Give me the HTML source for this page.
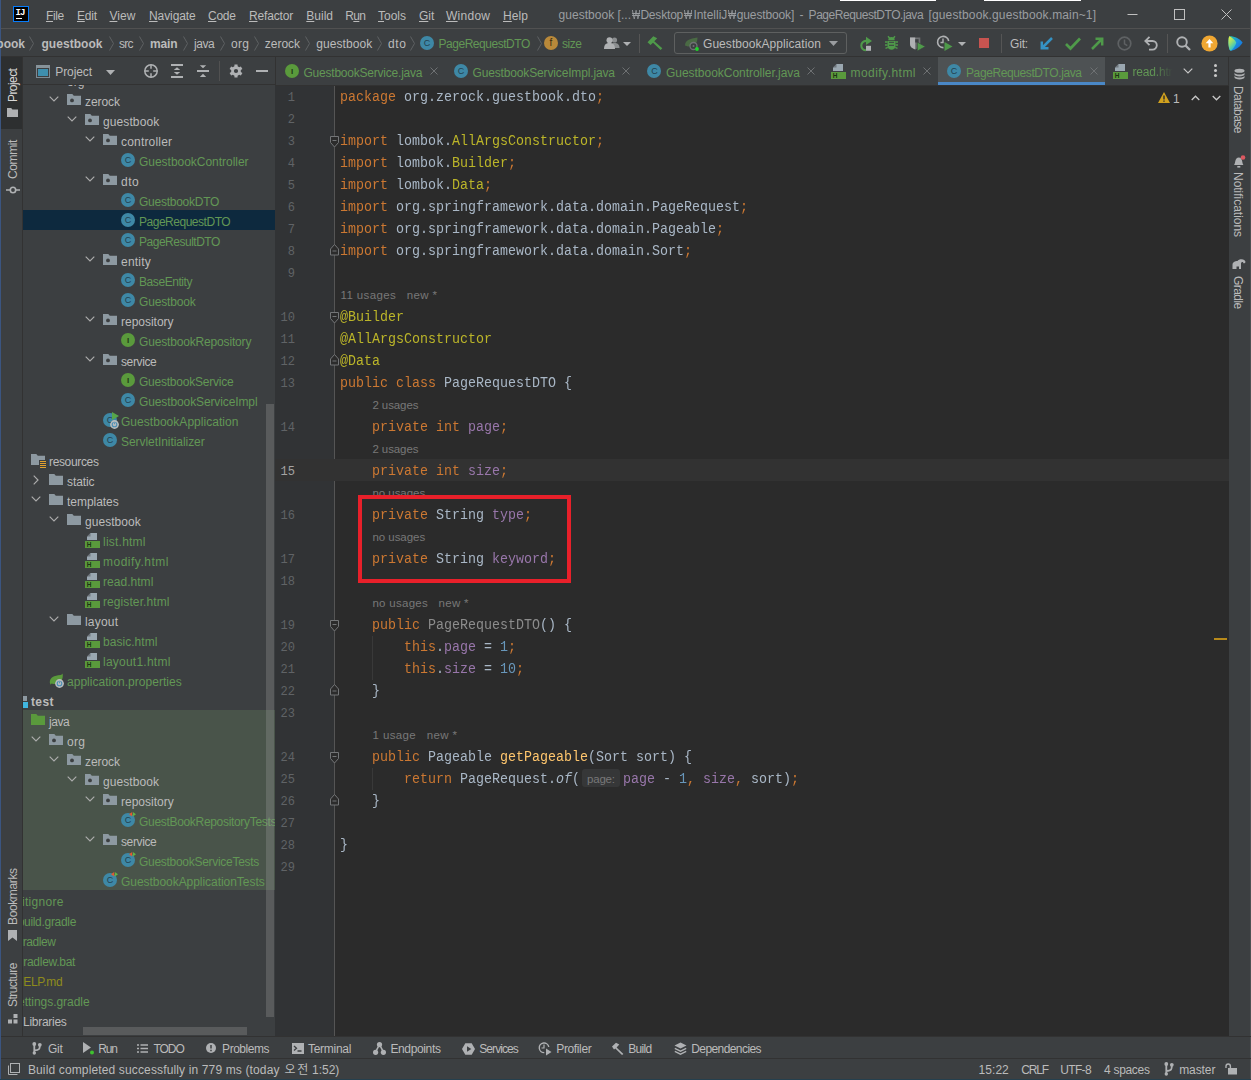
<!DOCTYPE html><html><head><meta charset="utf-8"><title>IntelliJ</title><style>
*{box-sizing:border-box;margin:0;padding:0}
html,body{width:1251px;height:1080px;overflow:hidden;background:#3c3f41}
body{position:relative;font-family:"Liberation Sans", "Noto Sans CJK KR", sans-serif;font-size:12px;color:#bbbbbb;line-height:1}
.a{position:absolute}
.t{position:absolute;white-space:pre;line-height:20px;height:20px}
.g{color:#629755}
.row{position:absolute;left:23px;width:252px;height:20px}
svg{position:absolute;overflow:visible}
u{text-underline-offset:1px;text-decoration-thickness:1px}
.code{position:absolute;left:340px;font-family:"Liberation Mono", monospace;font-size:13.33px;line-height:22px;height:22px;white-space:pre;color:#a9b7c6;transform:scaleY(1.12);transform-origin:0 14.600px}
.ln{position:absolute;left:275px;width:20px;text-align:right;font-family:"Liberation Mono", monospace;font-size:12px;line-height:22px;height:22px;color:#606366;white-space:pre}
.hint{position:absolute;font-size:11.5px;line-height:22px;height:22px;color:#787878;white-space:pre}
.k{color:#cc7832}.an{color:#bbb529}.f{color:#9876aa}.n{color:#6897bb}.m{color:#ffc66d}
.ic{position:absolute;width:14px;height:14px;border-radius:50%;font-size:9px;line-height:15.500px;text-align:center;color:#23414e}
.vt{position:absolute;white-space:pre;line-height:14px;height:14px;transform-origin:0 0}
</style></head><body><div class="a" style="left:0;top:0;width:1251px;height:1080px;background:#3c3f41"></div>
<div class="a" style="left:840px;top:0;width:96px;height:1px;background:#fff"></div>
<div class="a" style="left:984px;top:0;width:97px;height:1px;background:#fff"></div>
<div class="a" style="left:1px;top:28px;width:1250px;height:1px;background:#515151"></div>
<div class="a" style="left:1px;top:56px;width:1250px;height:1px;background:#323232"></div>
<div class="a" style="left:275px;top:86px;width:954px;height:951px;background:#2b2b2b"></div>
<div class="a" style="left:275px;top:86px;width:60px;height:951px;background:#313335"></div>
<div class="a" style="left:334px;top:86px;width:1px;height:951px;background:#555555"></div>
<div class="a" style="left:275px;top:459px;width:954px;height:22px;background:#323232"></div>
<div class="a" style="left:0;top:0;width:1px;height:1080px;background:#3b5580"></div>
<div class="a" style="left:1px;top:57px;width:21px;height:72px;background:#2d2f30"></div>
<div class="a" style="left:22px;top:57px;width:1px;height:980px;background:#323232"></div>
<div class="a" style="left:23px;top:84px;width:252px;height:1px;background:#323232"></div>
<div class="a" style="left:275px;top:57px;width:1px;height:28px;background:#323232"></div>
<div class="a" style="left:275px;top:85px;width:954px;height:1px;background:#323232"></div>
<div class="a" style="left:1228px;top:57px;width:1px;height:29px;background:#323232"></div>
<div class="a" style="left:1250px;top:0;width:1px;height:1080px;background:#4e5153"></div>
<div class="a" style="left:1px;top:1036px;width:1250px;height:1px;background:#323232"></div>
<div class="a" style="left:1px;top:1058px;width:1250px;height:1px;background:#323232"></div>
<div class="a" style="left:0;top:1079px;width:1251px;height:1px;background:#25404e"></div>
<div class="a" style="left:13px;top:6px;width:16px;height:16px;background:#000;border:1px solid #087cfa"></div>
<div class="a" style="left:15.500px;top:9px;font-family:'Liberation Mono',monospace;font-weight:bold;font-size:9px;line-height:9px;color:#fff;letter-spacing:-1px">IJ</div>
<div class="a" style="left:16px;top:18px;width:6px;height:1px;background:#fff"></div>
<div class="t" style="left:46px;top:6px;letter-spacing:-0.346px;"><u>F</u>ile</div>
<div class="t" style="left:77px;top:6px;letter-spacing:-0.226px;"><u>E</u>dit</div>
<div class="t" style="left:109.5px;top:6px;letter-spacing:0.069px;"><u>V</u>iew</div>
<div class="t" style="left:149px;top:6px;letter-spacing:-0.095px;"><u>N</u>avigate</div>
<div class="t" style="left:208px;top:6px;letter-spacing:-0.296px;"><u>C</u>ode</div>
<div class="t" style="left:249px;top:6px;letter-spacing:-0.165px;"><u>R</u>efactor</div>
<div class="t" style="left:306.3px;top:6px;letter-spacing:0.004px;"><u>B</u>uild</div>
<div class="t" style="left:345.3px;top:6px;letter-spacing:-0.657px;">R<u>u</u>n</div>
<div class="t" style="left:378px;top:6px;letter-spacing:-0.004px;"><u>T</u>ools</div>
<div class="t" style="left:419px;top:6px;letter-spacing:-0.017px;"><u>G</u>it</div>
<div class="t" style="left:446px;top:6px;letter-spacing:0.264px;"><u>W</u>indow</div>
<div class="t" style="left:503px;top:6px;letter-spacing:0.106px;"><u>H</u>elp</div>
<div class="t" style="left:558.5px;top:5px;color:#9a9da0;letter-spacing:0.035px;">guestbook [...</div>
<div class="t" style="left:631.8px;top:5px;color:#9a9da0;width:8.500px;overflow:visible"><span style="display:inline-block;transform:scaleX(0.72);transform-origin:0 50%">₩</span></div>
<div class="t" style="left:684.2px;top:5px;color:#9a9da0;width:8.500px;overflow:visible"><span style="display:inline-block;transform:scaleX(0.72);transform-origin:0 50%">₩</span></div>
<div class="t" style="left:728px;top:5px;color:#9a9da0;width:8.500px;overflow:visible"><span style="display:inline-block;transform:scaleX(0.72);transform-origin:0 50%">₩</span></div>
<div class="t" style="left:640.4px;top:5px;color:#9a9da0;letter-spacing:-0.187px;">Desktop</div>
<div class="t" style="left:693.4px;top:5px;color:#9a9da0;letter-spacing:-0.016px;">IntelliJ</div>
<div class="t" style="left:736.8px;top:5px;color:#9a9da0;letter-spacing:-0.135px;">guestbook]</div>
<div class="t" style="left:799.6px;top:5px;color:#9a9da0;">-</div>
<div class="t" style="left:808.6px;top:5px;color:#9a9da0;letter-spacing:-0.455px;">PageRequestDTO.java</div>
<div class="t" style="left:928.5px;top:5px;color:#9a9da0;letter-spacing:0.138px;">[guestbook.guestbook.main~1]</div>
<svg style="left:1127px;top:9px" width="110" height="12" viewBox="0 0 110 12"><path d="M0.500 5.500h10" stroke="#c0c0c0" stroke-width="1"/><rect x="47.500" y="0.500" width="10" height="10" fill="none" stroke="#c0c0c0"/><path d="M94.500 0.500l10 10M104.500 0.500L94.500 10.500" stroke="#c0c0c0" stroke-width="1"/></svg>
<div class="t" style="left:-3.664999999999999px;top:34px;font-weight:bold;">book</div>
<div class="t" style="left:41.5px;top:34px;font-weight:bold;letter-spacing:0.041px;">guestbook</div>
<div class="t" style="left:119px;top:34px;letter-spacing:-0.748px;">src</div>
<div class="t" style="left:150px;top:34px;font-weight:bold;letter-spacing:-0.169px;">main</div>
<div class="t" style="left:194px;top:34px;letter-spacing:-0.471px;">java</div>
<div class="t" style="left:231px;top:34px;letter-spacing:0.328px;">org</div>
<div class="t" style="left:264.8px;top:34px;letter-spacing:-0.029px;">zerock</div>
<div class="t" style="left:316.2px;top:34px;letter-spacing:0.090px;">guestbook</div>
<div class="t" style="left:388px;top:34px;letter-spacing:0.659px;">dto</div>
<svg style="left:28.8px;top:35.500px" width="5" height="15" viewBox="0 0 5 15"><path d="M0.500 0.500L4.500 7.500L0.500 14.500" fill="none" stroke="#5e6163" stroke-width="1"/></svg>
<svg style="left:108.8px;top:35.500px" width="5" height="15" viewBox="0 0 5 15"><path d="M0.500 0.500L4.500 7.500L0.500 14.500" fill="none" stroke="#5e6163" stroke-width="1"/></svg>
<svg style="left:139.3px;top:35.500px" width="5" height="15" viewBox="0 0 5 15"><path d="M0.500 0.500L4.500 7.500L0.500 14.500" fill="none" stroke="#5e6163" stroke-width="1"/></svg>
<svg style="left:183.3px;top:35.500px" width="5" height="15" viewBox="0 0 5 15"><path d="M0.500 0.500L4.500 7.500L0.500 14.500" fill="none" stroke="#5e6163" stroke-width="1"/></svg>
<svg style="left:220.3px;top:35.500px" width="5" height="15" viewBox="0 0 5 15"><path d="M0.500 0.500L4.500 7.500L0.500 14.500" fill="none" stroke="#5e6163" stroke-width="1"/></svg>
<svg style="left:254.3px;top:35.500px" width="5" height="15" viewBox="0 0 5 15"><path d="M0.500 0.500L4.500 7.500L0.500 14.500" fill="none" stroke="#5e6163" stroke-width="1"/></svg>
<svg style="left:305.3px;top:35.500px" width="5" height="15" viewBox="0 0 5 15"><path d="M0.500 0.500L4.500 7.500L0.500 14.500" fill="none" stroke="#5e6163" stroke-width="1"/></svg>
<svg style="left:377.3px;top:35.500px" width="5" height="15" viewBox="0 0 5 15"><path d="M0.500 0.500L4.500 7.500L0.500 14.500" fill="none" stroke="#5e6163" stroke-width="1"/></svg>
<svg style="left:410.3px;top:35.500px" width="5" height="15" viewBox="0 0 5 15"><path d="M0.500 0.500L4.500 7.500L0.500 14.500" fill="none" stroke="#5e6163" stroke-width="1"/></svg>
<svg style="left:536.8px;top:35.500px" width="5" height="15" viewBox="0 0 5 15"><path d="M0.500 0.500L4.500 7.500L0.500 14.500" fill="none" stroke="#5e6163" stroke-width="1"/></svg>
<div class="ic" style="left:420px;top:36px;background:#3e88a6">C</div>
<div class="t" style="left:438.5px;top:34px;color:#629755;letter-spacing:-0.464px;">PageRequestDTO</div>
<div class="ic" style="left:544px;top:36px;background:#b9893a;color:#3d2c10;font-size:10px;line-height:14px">f</div>
<div class="t" style="left:562px;top:34px;color:#629755;letter-spacing:-0.447px;">size</div>
<div class="a" style="left:639px;top:34px;width:1px;height:19px;background:#555"></div>
<div class="a" style="left:674px;top:32px;width:173px;height:22px;border:1px solid #5e6060;border-radius:3px"></div>
<div class="t" style="left:703px;top:34px;letter-spacing:0.056px;">GuestbookApplication</div>
<svg style="left:829px;top:41px" width="9" height="5" viewBox="0 0 9 5"><path d="M0 0h9L4.5 5z" fill="#9a9da0"/></svg>
<div class="a" style="left:1001px;top:34px;width:1px;height:19px;background:#555"></div>
<div class="a" style="left:1167px;top:34px;width:1px;height:19px;background:#555"></div>
<div class="t" style="left:1010px;top:34px;letter-spacing:-0.156px;">Git:</div>
<div class="a" style="left:23px;top:710px;width:252px;height:180px;background:#49544a"></div>
<div class="a" style="left:23px;top:210px;width:252px;height:20px;background:#0d293e"></div>
<div class="a" id="tree" style="left:23px;top:85px;width:252px;height:951px;overflow:hidden">
<svg style="left:26px;top:-11px" width="14" height="11" viewBox="0 0 14 11"><path d="M0 0h5.300l1.500 1.800H14V11H0z" fill="#8d99a1"/><circle cx="5" cy="6.400" r="1.900" fill="#3c3f41"/></svg>
<svg style="left:8px;top:-9px" width="10" height="6" viewBox="0 0 10 6"><path d="M0.7 0.7L5 5L9.3 0.7" fill="none" stroke="#adadad" stroke-width="1.150"/></svg>
<div class="t" style="left:44px;top:-13.299999999999997px;color:#bbbbbb;">org</div>
<svg style="left:44px;top:9px" width="14" height="11" viewBox="0 0 14 11"><path d="M0 0h5.300l1.500 1.800H14V11H0z" fill="#8d99a1"/><circle cx="5" cy="6.400" r="1.900" fill="#3c3f41"/></svg>
<svg style="left:26px;top:11px" width="10" height="6" viewBox="0 0 10 6"><path d="M0.7 0.7L5 5L9.3 0.7" fill="none" stroke="#adadad" stroke-width="1.150"/></svg>
<div class="t" style="left:62px;top:6.700000000000003px;color:#bbbbbb;letter-spacing:-0.069px;">zerock</div>
<svg style="left:62px;top:29px" width="14" height="11" viewBox="0 0 14 11"><path d="M0 0h5.300l1.500 1.800H14V11H0z" fill="#8d99a1"/><circle cx="5" cy="6.400" r="1.900" fill="#3c3f41"/></svg>
<svg style="left:44px;top:31px" width="10" height="6" viewBox="0 0 10 6"><path d="M0.7 0.7L5 5L9.3 0.7" fill="none" stroke="#adadad" stroke-width="1.150"/></svg>
<div class="t" style="left:80px;top:26.700000000000003px;color:#bbbbbb;letter-spacing:0.103px;">guestbook</div>
<svg style="left:80px;top:49px" width="14" height="11" viewBox="0 0 14 11"><path d="M0 0h5.300l1.500 1.800H14V11H0z" fill="#8d99a1"/><circle cx="5" cy="6.400" r="1.900" fill="#3c3f41"/></svg>
<svg style="left:62px;top:51px" width="10" height="6" viewBox="0 0 10 6"><path d="M0.7 0.7L5 5L9.3 0.7" fill="none" stroke="#adadad" stroke-width="1.150"/></svg>
<div class="t" style="left:98px;top:46.69999999999999px;color:#bbbbbb;letter-spacing:0.183px;">controller</div>
<div class="ic" style="left:98px;top:68px;background:#3e88a6">C</div>
<div class="t" style="left:116px;top:66.69999999999999px;color:#629755;letter-spacing:-0.026px;">GuestbookController</div>
<svg style="left:80px;top:89px" width="14" height="11" viewBox="0 0 14 11"><path d="M0 0h5.300l1.500 1.800H14V11H0z" fill="#8d99a1"/><circle cx="5" cy="6.400" r="1.900" fill="#3c3f41"/></svg>
<svg style="left:62px;top:91px" width="10" height="6" viewBox="0 0 10 6"><path d="M0.7 0.7L5 5L9.3 0.7" fill="none" stroke="#adadad" stroke-width="1.150"/></svg>
<div class="t" style="left:98px;top:86.69999999999999px;color:#bbbbbb;letter-spacing:0.459px;">dto</div>
<div class="ic" style="left:98px;top:108px;background:#3e88a6">C</div>
<div class="t" style="left:116px;top:106.69999999999999px;color:#629755;letter-spacing:-0.250px;">GuestbookDTO</div>
<div class="ic" style="left:98px;top:128px;background:#3e88a6">C</div>
<div class="t" style="left:116px;top:126.69999999999999px;color:#629755;letter-spacing:-0.480px;">PageRequestDTO</div>
<div class="ic" style="left:98px;top:148px;background:#3e88a6">C</div>
<div class="t" style="left:116px;top:146.7px;color:#629755;letter-spacing:-0.488px;">PageResultDTO</div>
<svg style="left:80px;top:169px" width="14" height="11" viewBox="0 0 14 11"><path d="M0 0h5.300l1.500 1.800H14V11H0z" fill="#8d99a1"/><circle cx="5" cy="6.400" r="1.900" fill="#3c3f41"/></svg>
<svg style="left:62px;top:171px" width="10" height="6" viewBox="0 0 10 6"><path d="M0.7 0.7L5 5L9.3 0.7" fill="none" stroke="#adadad" stroke-width="1.150"/></svg>
<div class="t" style="left:98px;top:166.7px;color:#bbbbbb;letter-spacing:0.224px;">entity</div>
<div class="ic" style="left:98px;top:188px;background:#3e88a6">C</div>
<div class="t" style="left:116px;top:186.7px;color:#629755;letter-spacing:-0.429px;">BaseEntity</div>
<div class="ic" style="left:98px;top:208px;background:#3e88a6">C</div>
<div class="t" style="left:116px;top:206.7px;color:#629755;letter-spacing:-0.155px;">Guestbook</div>
<svg style="left:80px;top:229px" width="14" height="11" viewBox="0 0 14 11"><path d="M0 0h5.300l1.500 1.800H14V11H0z" fill="#8d99a1"/><circle cx="5" cy="6.400" r="1.900" fill="#3c3f41"/></svg>
<svg style="left:62px;top:231px" width="10" height="6" viewBox="0 0 10 6"><path d="M0.7 0.7L5 5L9.3 0.7" fill="none" stroke="#adadad" stroke-width="1.150"/></svg>
<div class="t" style="left:98px;top:226.7px;color:#bbbbbb;letter-spacing:-0.010px;">repository</div>
<div class="ic" style="left:98px;top:248px;background:#5a9a3c;color:#1f3a16;font-weight:bold;font-size:8px">I</div>
<div class="t" style="left:116px;top:246.7px;color:#629755;letter-spacing:-0.166px;">GuestbookRepository</div>
<svg style="left:80px;top:269px" width="14" height="11" viewBox="0 0 14 11"><path d="M0 0h5.300l1.500 1.800H14V11H0z" fill="#8d99a1"/><circle cx="5" cy="6.400" r="1.900" fill="#3c3f41"/></svg>
<svg style="left:62px;top:271px" width="10" height="6" viewBox="0 0 10 6"><path d="M0.7 0.7L5 5L9.3 0.7" fill="none" stroke="#adadad" stroke-width="1.150"/></svg>
<div class="t" style="left:98px;top:266.7px;color:#bbbbbb;letter-spacing:-0.385px;">service</div>
<div class="ic" style="left:98px;top:288px;background:#5a9a3c;color:#1f3a16;font-weight:bold;font-size:8px">I</div>
<div class="t" style="left:116px;top:286.7px;color:#629755;letter-spacing:-0.230px;">GuestbookService</div>
<div class="ic" style="left:98px;top:308px;background:#3e88a6">C</div>
<div class="t" style="left:116px;top:306.7px;color:#629755;letter-spacing:-0.112px;">GuestbookServiceImpl</div>
<div class="ic" style="left:80px;top:328px;background:#3e88a6">C</div>
<svg style="left:89px;top:327px" width="7" height="8" viewBox="0 0 7 8"><path d="M0 0l7 4L0 8z" fill="#57a64a"/></svg>
<svg style="left:86.5px;top:334.5px" width="9" height="9" viewBox="0 0 9 9"><circle cx="4.500" cy="4.500" r="4.400" fill="#b9bcbe"/><circle cx="4.500" cy="4.500" r="2.300" fill="none" stroke="#4d8fb5" stroke-width="1.100"/><path d="M4.500 2v2.500" stroke="#b9bcbe" stroke-width="1.600"/><path d="M4.500 2.300v2" stroke="#4d8fb5" stroke-width="0.900"/></svg>
<div class="t" style="left:98px;top:326.7px;color:#629755;letter-spacing:0.034px;">GuestbookApplication</div>
<div class="ic" style="left:80px;top:348px;background:#3e88a6">C</div>
<div class="t" style="left:98px;top:346.7px;color:#629755;letter-spacing:-0.059px;">ServletInitializer</div>
<svg style="left:8px;top:369px" width="14" height="11" viewBox="0 0 14 11"><path d="M0 0h5.300l1.500 1.800H14V11H0z" fill="#8d99a1"/></svg>
<svg style="left:16px;top:375px" width="7" height="9" viewBox="0 0 7 9"><rect x="0" y="0" width="7" height="9" fill="#3c3f41"/><path d="M1 1.500h6M1 3.500h6M1 5.500h6M1 7.500h6" stroke="#e0a030" stroke-width="1"/></svg>
<div class="t" style="left:26px;top:366.7px;color:#bbbbbb;letter-spacing:-0.349px;">resources</div>
<svg style="left:26px;top:389px" width="14" height="11" viewBox="0 0 14 11"><path d="M0 0h5.300l1.500 1.800H14V11H0z" fill="#8d99a1"/></svg>
<svg style="left:10px;top:390px" width="6" height="10" viewBox="0 0 6 10"><path d="M0.7 0.7L5 5L0.7 9.3" fill="none" stroke="#adadad" stroke-width="1.150"/></svg>
<div class="t" style="left:44px;top:386.7px;color:#bbbbbb;letter-spacing:-0.102px;">static</div>
<svg style="left:26px;top:409px" width="14" height="11" viewBox="0 0 14 11"><path d="M0 0h5.300l1.500 1.800H14V11H0z" fill="#8d99a1"/></svg>
<svg style="left:8px;top:411px" width="10" height="6" viewBox="0 0 10 6"><path d="M0.7 0.7L5 5L9.3 0.7" fill="none" stroke="#adadad" stroke-width="1.150"/></svg>
<div class="t" style="left:44px;top:406.7px;color:#bbbbbb;letter-spacing:-0.041px;">templates</div>
<svg style="left:44px;top:429px" width="14" height="11" viewBox="0 0 14 11"><path d="M0 0h5.300l1.500 1.800H14V11H0z" fill="#8d99a1"/></svg>
<svg style="left:26px;top:431px" width="10" height="6" viewBox="0 0 10 6"><path d="M0.7 0.7L5 5L9.3 0.7" fill="none" stroke="#adadad" stroke-width="1.150"/></svg>
<div class="t" style="left:62px;top:426.7px;color:#bbbbbb;letter-spacing:0.040px;">guestbook</div>
<svg style="left:62px;top:448px" width="15" height="15" viewBox="0 0 15 15"><path d="M5.500 0H12v7H2V3.500z" fill="#9aa7b0"/><path d="M5.500 0v3.500H2z" fill="#3c3f41" opacity=".45"/><rect x="0" y="8" width="15" height="7" fill="#5a9a3c"/><text x="1.800" y="13.900" font-family="Liberation Sans" font-weight="bold" font-size="6.500" fill="#1d3314">H</text></svg>
<div class="t" style="left:80px;top:446.70000000000005px;color:#629755;letter-spacing:0.229px;">list.html</div>
<svg style="left:62px;top:468px" width="15" height="15" viewBox="0 0 15 15"><path d="M5.500 0H12v7H2V3.500z" fill="#9aa7b0"/><path d="M5.500 0v3.500H2z" fill="#3c3f41" opacity=".45"/><rect x="0" y="8" width="15" height="7" fill="#5a9a3c"/><text x="1.800" y="13.900" font-family="Liberation Sans" font-weight="bold" font-size="6.500" fill="#1d3314">H</text></svg>
<div class="t" style="left:80px;top:466.70000000000005px;color:#629755;letter-spacing:0.504px;">modify.html</div>
<svg style="left:62px;top:488px" width="15" height="15" viewBox="0 0 15 15"><path d="M5.500 0H12v7H2V3.500z" fill="#9aa7b0"/><path d="M5.500 0v3.500H2z" fill="#3c3f41" opacity=".45"/><rect x="0" y="8" width="15" height="7" fill="#5a9a3c"/><text x="1.800" y="13.900" font-family="Liberation Sans" font-weight="bold" font-size="6.500" fill="#1d3314">H</text></svg>
<div class="t" style="left:80px;top:486.70000000000005px;color:#629755;letter-spacing:0.035px;">read.html</div>
<svg style="left:62px;top:508px" width="15" height="15" viewBox="0 0 15 15"><path d="M5.500 0H12v7H2V3.500z" fill="#9aa7b0"/><path d="M5.500 0v3.500H2z" fill="#3c3f41" opacity=".45"/><rect x="0" y="8" width="15" height="7" fill="#5a9a3c"/><text x="1.800" y="13.900" font-family="Liberation Sans" font-weight="bold" font-size="6.500" fill="#1d3314">H</text></svg>
<div class="t" style="left:80px;top:506.70000000000005px;color:#629755;letter-spacing:0.087px;">register.html</div>
<svg style="left:44px;top:529px" width="14" height="11" viewBox="0 0 14 11"><path d="M0 0h5.300l1.500 1.800H14V11H0z" fill="#8d99a1"/></svg>
<svg style="left:26px;top:531px" width="10" height="6" viewBox="0 0 10 6"><path d="M0.7 0.7L5 5L9.3 0.7" fill="none" stroke="#adadad" stroke-width="1.150"/></svg>
<div class="t" style="left:62px;top:526.7px;color:#bbbbbb;letter-spacing:0.196px;">layout</div>
<svg style="left:62px;top:548px" width="15" height="15" viewBox="0 0 15 15"><path d="M5.500 0H12v7H2V3.500z" fill="#9aa7b0"/><path d="M5.500 0v3.500H2z" fill="#3c3f41" opacity=".45"/><rect x="0" y="8" width="15" height="7" fill="#5a9a3c"/><text x="1.800" y="13.900" font-family="Liberation Sans" font-weight="bold" font-size="6.500" fill="#1d3314">H</text></svg>
<div class="t" style="left:80px;top:546.7px;color:#629755;letter-spacing:0.042px;">basic.html</div>
<svg style="left:62px;top:568px" width="15" height="15" viewBox="0 0 15 15"><path d="M5.500 0H12v7H2V3.500z" fill="#9aa7b0"/><path d="M5.500 0v3.500H2z" fill="#3c3f41" opacity=".45"/><rect x="0" y="8" width="15" height="7" fill="#5a9a3c"/><text x="1.800" y="13.900" font-family="Liberation Sans" font-weight="bold" font-size="6.500" fill="#1d3314">H</text></svg>
<div class="t" style="left:80px;top:566.7px;color:#629755;letter-spacing:0.236px;">layout1.html</div>
<svg style="left:26px;top:588px" width="16" height="16" viewBox="0 0 16 16"><path d="M0.800 9.500C0.800 4.500 5 2.500 11.500 2C12.500 1.800 13.200 1.200 13.600 0.500C14.600 6 12 11 5 11C4 11 3 10.800 2.500 10.500L1.500 11.800z" fill="#5a9a3c"/><circle cx="10.500" cy="10.500" r="4.400" fill="#b9bcbe"/><circle cx="10.500" cy="10.500" r="2.300" fill="none" stroke="#4d8fb5" stroke-width="1.100"/><path d="M10.500 8v2.500" stroke="#b9bcbe" stroke-width="1.600"/><path d="M10.500 8.300v2" stroke="#4d8fb5" stroke-width="0.900"/></svg>
<div class="t" style="left:44px;top:586.7px;color:#629755;letter-spacing:0.030px;">application.properties</div>
<div class="a" style="left:0px;top:611px;width:3.500px;height:4.500px;background:#8d99a1"></div><div class="a" style="left:0px;top:617px;width:4.500px;height:6px;background:#40b6e0"></div>
<div class="t" style="left:8px;top:606.7px;color:#bbbbbb;font-weight:bold;letter-spacing:0.353px;">test</div>
<svg style="left:8px;top:629px" width="14" height="11" viewBox="0 0 14 11"><path d="M0 0h5.300l1.500 1.800H14V11H0z" fill="#5a9a3c"/></svg>
<div class="t" style="left:26px;top:626.7px;color:#bbbbbb;letter-spacing:-0.438px;">java</div>
<svg style="left:26px;top:649px" width="14" height="11" viewBox="0 0 14 11"><path d="M0 0h5.300l1.500 1.800H14V11H0z" fill="#8d99a1"/><circle cx="5" cy="6.400" r="1.900" fill="#3c3f41"/></svg>
<svg style="left:8px;top:651px" width="10" height="6" viewBox="0 0 10 6"><path d="M0.7 0.7L5 5L9.3 0.7" fill="none" stroke="#adadad" stroke-width="1.150"/></svg>
<div class="t" style="left:44px;top:646.7px;color:#bbbbbb;letter-spacing:0.278px;">org</div>
<svg style="left:44px;top:669px" width="14" height="11" viewBox="0 0 14 11"><path d="M0 0h5.300l1.500 1.800H14V11H0z" fill="#8d99a1"/><circle cx="5" cy="6.400" r="1.900" fill="#3c3f41"/></svg>
<svg style="left:26px;top:671px" width="10" height="6" viewBox="0 0 10 6"><path d="M0.7 0.7L5 5L9.3 0.7" fill="none" stroke="#adadad" stroke-width="1.150"/></svg>
<div class="t" style="left:62px;top:666.7px;color:#bbbbbb;letter-spacing:-0.089px;">zerock</div>
<svg style="left:62px;top:689px" width="14" height="11" viewBox="0 0 14 11"><path d="M0 0h5.300l1.500 1.800H14V11H0z" fill="#8d99a1"/><circle cx="5" cy="6.400" r="1.900" fill="#3c3f41"/></svg>
<svg style="left:44px;top:691px" width="10" height="6" viewBox="0 0 10 6"><path d="M0.7 0.7L5 5L9.3 0.7" fill="none" stroke="#adadad" stroke-width="1.150"/></svg>
<div class="t" style="left:80px;top:686.7px;color:#bbbbbb;letter-spacing:0.065px;">guestbook</div>
<svg style="left:80px;top:709px" width="14" height="11" viewBox="0 0 14 11"><path d="M0 0h5.300l1.500 1.800H14V11H0z" fill="#8d99a1"/><circle cx="5" cy="6.400" r="1.900" fill="#3c3f41"/></svg>
<svg style="left:62px;top:711px" width="10" height="6" viewBox="0 0 10 6"><path d="M0.7 0.7L5 5L9.3 0.7" fill="none" stroke="#adadad" stroke-width="1.150"/></svg>
<div class="t" style="left:98px;top:706.7px;color:#bbbbbb;letter-spacing:0.001px;">repository</div>
<div class="ic" style="left:98px;top:728px;background:#3e88a6">C</div>
<svg style="left:106px;top:727px" width="7" height="5" viewBox="0 0 7 5"><rect x="-0.500" y="-0.500" width="8" height="5.500" fill="#3e88a6" opacity="0"/><path d="M3.200 0v4.600L0 2.300z" fill="#e05a33"/><path d="M3.900 0v4.600L7 2.300z" fill="#62b543"/></svg>
<div class="t" style="left:116px;top:726.7px;color:#629755;letter-spacing:-0.315px;">GuestBookRepositoryTests</div>
<svg style="left:80px;top:749px" width="14" height="11" viewBox="0 0 14 11"><path d="M0 0h5.300l1.500 1.800H14V11H0z" fill="#8d99a1"/><circle cx="5" cy="6.400" r="1.900" fill="#3c3f41"/></svg>
<svg style="left:62px;top:751px" width="10" height="6" viewBox="0 0 10 6"><path d="M0.7 0.7L5 5L9.3 0.7" fill="none" stroke="#adadad" stroke-width="1.150"/></svg>
<div class="t" style="left:98px;top:746.7px;color:#bbbbbb;letter-spacing:-0.385px;">service</div>
<div class="ic" style="left:98px;top:768px;background:#3e88a6">C</div>
<svg style="left:106px;top:767px" width="7" height="5" viewBox="0 0 7 5"><rect x="-0.500" y="-0.500" width="8" height="5.500" fill="#3e88a6" opacity="0"/><path d="M3.200 0v4.600L0 2.300z" fill="#e05a33"/><path d="M3.900 0v4.600L7 2.300z" fill="#62b543"/></svg>
<div class="t" style="left:116px;top:766.7px;color:#629755;letter-spacing:-0.288px;">GuestbookServiceTests</div>
<div class="ic" style="left:80px;top:788px;background:#3e88a6">C</div>
<svg style="left:88px;top:787px" width="7" height="5" viewBox="0 0 7 5"><rect x="-0.500" y="-0.500" width="8" height="5.500" fill="#3e88a6" opacity="0"/><path d="M3.200 0v4.600L0 2.300z" fill="#e05a33"/><path d="M3.900 0v4.600L7 2.300z" fill="#62b543"/></svg>
<div class="t" style="left:98px;top:786.7px;color:#629755;letter-spacing:-0.044px;">GuestbookApplicationTests</div>
<div class="t" style="right:211.1px;top:806.7px;color:#629755;letter-spacing:0.277px;margin-right:0.277px">.gitignore</div>
<div class="t" style="right:199.2px;top:826.7px;color:#629755;letter-spacing:-0.297px;margin-right:-0.297px">build.gradle</div>
<div class="t" style="right:220.1px;top:846.7px;color:#629755;letter-spacing:-0.464px;margin-right:-0.464px">gradlew</div>
<div class="t" style="right:200.2px;top:866.7px;color:#629755;letter-spacing:-0.289px;margin-right:-0.289px">gradlew.bat</div>
<div class="t" style="right:213.2px;top:886.7px;color:#8f8c1c;letter-spacing:-0.388px;margin-right:-0.388px">HELP.md</div>
<div class="t" style="right:185.4px;top:906.7px;color:#629755;letter-spacing:-0.031px;margin-right:-0.031px">settings.gradle</div>
<div class="t" style="left:0px;top:926.7px;color:#bbbbbb;letter-spacing:-0.278px;">Libraries</div>
</div>
<div class="a" style="left:23px;top:57px;width:252px;height:27px;background:#3c3f41;z-index:0"></div>
<div class="a" style="left:266px;top:404px;width:8px;height:613px;background:rgba(166,166,166,0.28)"></div>
<div class="a" style="left:83px;top:1027px;width:164px;height:8px;background:rgba(166,166,166,0.28)"></div>
<svg style="left:36px;top:65px" width="14" height="13" viewBox="0 0 14 13"><rect x="0.5" y="0.5" width="13" height="12" fill="#3c3f41" stroke="#7d8a93"/><rect x="0" y="0" width="14" height="3" fill="#87939a"/><rect x="2" y="4" width="10" height="7" fill="#3e8fae"/></svg>
<div class="t" style="left:55.3px;top:62px;letter-spacing:-0.108px;">Project</div>
<svg style="left:106px;top:70px" width="9" height="5" viewBox="0 0 9 5"><path d="M0 0h9L4.5 5z" fill="#afb1b3"/></svg>
<div class="a" style="left:219px;top:61px;width:1px;height:20px;background:#515151"></div>
<svg style="left:144px;top:64px" width="14" height="14" viewBox="0 0 14 14"><circle cx="7" cy="7" r="6.200" fill="none" stroke="#afb1b3" stroke-width="1.500"/><path d="M7 0.500v4.300M7 9.200v4.300M0.500 7h4.300M9.200 7h4.300" stroke="#afb1b3" stroke-width="1.500"/></svg>
<svg style="left:171px;top:64px" width="12" height="14" viewBox="0 0 12 14"><path d="M0 1h12M0 13h12" stroke="#afb1b3" stroke-width="2"/><path d="M6 3.300l3.200 2.700H2.800zM6 10.700l3.200-2.700H2.800z" fill="#afb1b3"/></svg>
<svg style="left:197px;top:64px" width="12" height="14" viewBox="0 0 12 14"><path d="M0 7h12" stroke="#afb1b3" stroke-width="2"/><path d="M6 4.200l3.200-2.900H2.800zM6 9.800l3.200 3.100H2.800z" fill="#afb1b3"/></svg>
<svg style="left:229px;top:64px" width="14" height="14" viewBox="0 0 14 14"><path fill-rule="evenodd" d="M5.39 2.37L5.47 0.48L8.53 0.48L8.61 2.37L10.20 3.29L11.88 2.41L13.41 5.06L11.81 6.08L11.81 7.92L13.41 8.94L11.88 11.59L10.20 10.71L8.61 11.63L8.53 13.52L5.47 13.52L5.39 11.63L3.80 10.71L2.12 11.59L0.59 8.94L2.19 7.92L2.19 6.08L0.59 5.06L2.12 2.41L3.80 3.29zM9.10 7.00a2.1 2.1 0 1 0 -4.20 0a2.1 2.1 0 1 0 4.20 0z" fill="#afb1b3"/></svg>
<div class="a" style="left:256px;top:70px;width:12px;height:2px;background:#afb1b3"></div>
<div class="a" style="left:938px;top:57px;width:167px;height:28px;background:#4e5254"></div>
<div class="a" style="left:938px;top:82px;width:167px;height:3px;background:#4a88c7"></div>
<div class="ic" style="left:285px;top:64px;background:#5a9a3c;color:#1f3a16;font-weight:bold;font-size:8px">I</div>
<div class="t" style="left:303.5px;top:62.5px;color:#629755;letter-spacing:-0.220px;">GuestbookService.java</div>
<svg style="left:429.5px;top:67px" width="8" height="8" viewBox="0 0 8 8"><path d="M0.5 0.5l7 7M7.5 0.5l-7 7" stroke="#6e7173" stroke-width="1"/></svg>
<div class="ic" style="left:454px;top:64px;background:#3e88a6">C</div>
<div class="t" style="left:472.5px;top:62.5px;color:#629755;letter-spacing:-0.149px;">GuestbookServiceImpl.java</div>
<svg style="left:622px;top:67px" width="8" height="8" viewBox="0 0 8 8"><path d="M0.5 0.5l7 7M7.5 0.5l-7 7" stroke="#6e7173" stroke-width="1"/></svg>
<div class="ic" style="left:647.4px;top:64px;background:#3e88a6">C</div>
<div class="t" style="left:666px;top:62.5px;color:#629755;letter-spacing:-0.032px;">GuestbookController.java</div>
<svg style="left:807px;top:67px" width="8" height="8" viewBox="0 0 8 8"><path d="M0.5 0.5l7 7M7.5 0.5l-7 7" stroke="#6e7173" stroke-width="1"/></svg>
<svg style="left:831px;top:64px" width="15" height="15" viewBox="0 0 15 15"><path d="M5.500 0H12v7H2V3.500z" fill="#9aa7b0"/><path d="M5.500 0v3.500H2z" fill="#3c3f41" opacity=".45"/><rect x="0" y="8" width="15" height="7" fill="#5a9a3c"/><text x="1.800" y="13.900" font-family="Liberation Sans" font-weight="bold" font-size="6.500" fill="#1d3314">H</text></svg>
<div class="t" style="left:850.5px;top:62.5px;color:#629755;letter-spacing:0.454px;">modify.html</div>
<svg style="left:922.5px;top:67px" width="8" height="8" viewBox="0 0 8 8"><path d="M0.5 0.5l7 7M7.5 0.5l-7 7" stroke="#6e7173" stroke-width="1"/></svg>
<div class="ic" style="left:947px;top:64px;background:#3e88a6">C</div>
<div class="t" style="left:966px;top:62.5px;color:#629755;letter-spacing:-0.399px;">PageRequestDTO.java</div>
<svg style="left:1089.5px;top:67px" width="8" height="8" viewBox="0 0 8 8"><path d="M0.5 0.5l7 7M7.5 0.5l-7 7" stroke="#6e7173" stroke-width="1"/></svg>
<svg style="left:1113px;top:64px" width="15" height="15" viewBox="0 0 15 15"><path d="M5.500 0H12v7H2V3.500z" fill="#9aa7b0"/><path d="M5.500 0v3.500H2z" fill="#3c3f41" opacity=".45"/><rect x="0" y="8" width="15" height="7" fill="#5a9a3c"/><text x="1.800" y="13.900" font-family="Liberation Sans" font-weight="bold" font-size="6.500" fill="#1d3314">H</text></svg>
<div class="t" style="left:1132.5px;top:62px;color:#629755;letter-spacing:-0.190px;width:40px;overflow:hidden;-webkit-mask-image:linear-gradient(90deg,#000 50%,transparent 100%);">read.html</div>
<svg style="left:1183px;top:68px" width="10" height="6" viewBox="0 0 10 6"><path d="M0.7 0.7L5 5L9.3 0.7" fill="none" stroke="#c8c8c8" stroke-width="1.150"/></svg>
<div class="a" style="left:1214px;top:64px;width:3px;height:3px;border-radius:50%;background:#c8c8c8;box-shadow:0 5px 0 #c8c8c8,0 10px 0 #c8c8c8"></div>
<div class="ln" style="top:87px;color:#606366">1</div>
<div class="code" style="top:87px"><span class="k">package </span>org.zerock.guestbook.dto<span class="k">;</span></div>
<div class="ln" style="top:109px;color:#606366">2</div>
<div class="ln" style="top:131px;color:#606366">3</div>
<div class="code" style="top:131px"><span class="k">import </span>lombok.<span class="an">AllArgsConstructor</span><span class="k">;</span></div>
<div class="ln" style="top:153px;color:#606366">4</div>
<div class="code" style="top:153px"><span class="k">import </span>lombok.<span class="an">Builder</span><span class="k">;</span></div>
<div class="ln" style="top:175px;color:#606366">5</div>
<div class="code" style="top:175px"><span class="k">import </span>lombok.<span class="an">Data</span><span class="k">;</span></div>
<div class="ln" style="top:197px;color:#606366">6</div>
<div class="code" style="top:197px"><span class="k">import </span>org.springframework.data.domain.PageRequest<span class="k">;</span></div>
<div class="ln" style="top:219px;color:#606366">7</div>
<div class="code" style="top:219px"><span class="k">import </span>org.springframework.data.domain.Pageable<span class="k">;</span></div>
<div class="ln" style="top:241px;color:#606366">8</div>
<div class="code" style="top:241px"><span class="k">import </span>org.springframework.data.domain.Sort<span class="k">;</span></div>
<div class="ln" style="top:263px;color:#606366">9</div>
<div class="ln" style="top:307px;color:#606366">10</div>
<div class="code" style="top:307px"><span class="an">@Builder</span></div>
<div class="ln" style="top:329px;color:#606366">11</div>
<div class="code" style="top:329px"><span class="an">@AllArgsConstructor</span></div>
<div class="ln" style="top:351px;color:#606366">12</div>
<div class="code" style="top:351px"><span class="an">@Data</span></div>
<div class="ln" style="top:373px;color:#606366">13</div>
<div class="code" style="top:373px"><span class="k">public class </span>PageRequestDTO {</div>
<div class="ln" style="top:417px;color:#606366">14</div>
<div class="code" style="top:417px">    <span class="k">private int </span><span class="f">page</span><span class="k">;</span></div>
<div class="ln" style="top:461px;color:#a4a3a3">15</div>
<div class="code" style="top:461px">    <span class="k">private int </span><span class="f">size</span><span class="k">;</span></div>
<div class="ln" style="top:505px;color:#606366">16</div>
<div class="code" style="top:505px">    <span class="k">private </span>String <span class="f">type</span><span class="k">;</span></div>
<div class="ln" style="top:549px;color:#606366">17</div>
<div class="code" style="top:549px">    <span class="k">private </span>String <span class="f">keyword</span><span class="k">;</span></div>
<div class="ln" style="top:571px;color:#606366">18</div>
<div class="ln" style="top:615px;color:#606366">19</div>
<div class="code" style="top:615px">    <span class="k">public </span><span style="color:#8c8c8c">PageRequestDTO</span>() {</div>
<div class="ln" style="top:637px;color:#606366">20</div>
<div class="code" style="top:637px">        <span class="k">this</span>.<span class="f">page</span> = <span class="n">1</span><span class="k">;</span></div>
<div class="ln" style="top:659px;color:#606366">21</div>
<div class="code" style="top:659px">        <span class="k">this</span>.<span class="f">size</span> = <span class="n">10</span><span class="k">;</span></div>
<div class="ln" style="top:681px;color:#606366">22</div>
<div class="code" style="top:681px">    }</div>
<div class="ln" style="top:703px;color:#606366">23</div>
<div class="ln" style="top:747px;color:#606366">24</div>
<div class="code" style="top:747px">    <span class="k">public </span>Pageable <span class="m">getPageable</span>(Sort sort) {</div>
<div class="ln" style="top:769px;color:#606366">25</div>
<div class="code" style="top:769px">        <span class="k">return </span>PageRequest.<i>of</i>(</div>
<div class="a" style="left:582px;top:769px;width:38px;height:18px;background:#363738;border-radius:3px"></div>
<div class="hint" style="left:587px;top:768px;letter-spacing:-0.195px;">page:</div>
<div class="code" style="top:769px;left:623px"><span class="f">page</span> - <span class="n">1</span><span class="k">,</span> <span class="f">size</span><span class="k">,</span> sort)<span class="k">;</span></div>
<div class="ln" style="top:791px;color:#606366">26</div>
<div class="code" style="top:791px">    }</div>
<div class="ln" style="top:813px;color:#606366">27</div>
<div class="ln" style="top:835px;color:#606366">28</div>
<div class="code" style="top:835px">}</div>
<div class="ln" style="top:857px;color:#606366">29</div>
<div class="hint" style="left:340.5px;top:284px;letter-spacing:0.371px;">11 usages   new *</div>
<div class="hint" style="left:372.4px;top:394px;letter-spacing:-0.082px;">2 usages</div>
<div class="hint" style="left:372.4px;top:438px;letter-spacing:-0.082px;">2 usages</div>
<div class="hint" style="left:372.4px;top:482px;letter-spacing:-0.034px;">no usages</div>
<div class="hint" style="left:372.4px;top:526px;letter-spacing:-0.034px;">no usages</div>
<div class="hint" style="left:372.4px;top:592px;letter-spacing:0.292px;">no usages   new *</div>
<div class="hint" style="left:372.6px;top:724px;letter-spacing:0.359px;">1 usage   new *</div>
<div class="a" style="left:372px;top:636px;width:1px;height:44px;background:#393939"></div>
<div class="a" style="left:372px;top:768px;width:1px;height:22px;background:#393939"></div>
<svg style="left:330px;top:136px" width="9" height="11.500" viewBox="0 0 9 11.500"><path d="M0.500 0.500h8v6L4.500 11L0.500 6.500z" fill="#2b2b2b" stroke="#737577"/><path d="M2.500 4.500h4" stroke="#737577"/></svg>
<svg style="left:330px;top:243.5px" width="9" height="11.500" viewBox="0 0 9 11.500"><path d="M0.500 11h8v-6L4.500 0.500L0.500 5z" fill="#2b2b2b" stroke="#737577"/><path d="M2.500 7h4" stroke="#737577"/></svg>
<svg style="left:330px;top:312px" width="9" height="11.500" viewBox="0 0 9 11.500"><path d="M0.500 0.500h8v6L4.500 11L0.500 6.500z" fill="#2b2b2b" stroke="#737577"/><path d="M2.500 4.500h4" stroke="#737577"/></svg>
<svg style="left:330px;top:353.5px" width="9" height="11.500" viewBox="0 0 9 11.500"><path d="M0.500 11h8v-6L4.500 0.500L0.500 5z" fill="#2b2b2b" stroke="#737577"/><path d="M2.500 7h4" stroke="#737577"/></svg>
<svg style="left:330px;top:620px" width="9" height="11.500" viewBox="0 0 9 11.500"><path d="M0.500 0.500h8v6L4.500 11L0.500 6.500z" fill="#2b2b2b" stroke="#737577"/><path d="M2.500 4.500h4" stroke="#737577"/></svg>
<svg style="left:330px;top:683.5px" width="9" height="11.500" viewBox="0 0 9 11.500"><path d="M0.500 11h8v-6L4.500 0.500L0.500 5z" fill="#2b2b2b" stroke="#737577"/><path d="M2.500 7h4" stroke="#737577"/></svg>
<svg style="left:330px;top:752px" width="9" height="11.500" viewBox="0 0 9 11.500"><path d="M0.500 0.500h8v6L4.500 11L0.500 6.500z" fill="#2b2b2b" stroke="#737577"/><path d="M2.500 4.500h4" stroke="#737577"/></svg>
<svg style="left:330px;top:793.5px" width="9" height="11.500" viewBox="0 0 9 11.500"><path d="M0.500 11h8v-6L4.500 0.500L0.500 5z" fill="#2b2b2b" stroke="#737577"/><path d="M2.500 7h4" stroke="#737577"/></svg>
<div class="a" style="left:358px;top:495px;width:213px;height:88px;border:4px solid #e8202a"></div>
<svg style="left:1158px;top:92px" width="12" height="11" viewBox="0 0 12 11"><path d="M6 0L12 11H0z" fill="#d1a11e"/><path d="M6 3.5v4M6 8.5v1.3" stroke="#2b2b2b" stroke-width="1.4"/></svg>
<div class="t" style="left:1173px;top:89px;">1</div>
<svg style="left:1191px;top:95px" width="9" height="6" viewBox="0 0 9 6"><path d="M0.7 5L4.5 1.2L8.3 5" fill="none" stroke="#c8c8c8" stroke-width="1.3"/></svg>
<svg style="left:1212px;top:95px" width="9" height="6" viewBox="0 0 9 6"><path d="M0.7 1L4.5 4.8L8.3 1" fill="none" stroke="#c8c8c8" stroke-width="1.3"/></svg>
<div class="a" style="left:1214px;top:638px;width:13px;height:2px;background:#b88a1b"></div>
<div class="vt" style="left:6px;top:101.7px;transform:rotate(-90deg);letter-spacing:-0.575px;color:#d8d8d8;">Project</div>
<svg style="left:7px;top:108px" width="11" height="9" viewBox="0 0 11 9"><path d="M0 0h4.200l1.200 1.500H11V9H0z" fill="#afb1b3"/></svg>
<div class="vt" style="left:6px;top:179.4px;transform:rotate(-90deg);letter-spacing:-0.387px;">Commit</div>
<svg style="left:6px;top:186px" width="14" height="8" viewBox="0 0 14 8"><circle cx="7" cy="4" r="2.700" fill="none" stroke="#afb1b3" stroke-width="1.600"/><path d="M0 4h4M10 4h4" stroke="#afb1b3" stroke-width="1.600"/></svg>
<div class="vt" style="left:6px;top:924.7px;transform:rotate(-90deg);letter-spacing:-0.377px;">Bookmarks</div>
<svg style="left:8px;top:930px" width="9" height="11" viewBox="0 0 9 11"><path d="M0 0h9v11L4.500 7.500L0 11z" fill="#afb1b3"/></svg>
<div class="vt" style="left:6px;top:1007px;transform:rotate(-90deg);letter-spacing:-0.548px;">Structure</div>
<svg style="left:8px;top:1014px" width="10" height="10" viewBox="0 0 10 10"><rect x="5.500" y="0" width="4" height="4" fill="#afb1b3"/><rect x="0" y="5.500" width="4" height="4" fill="#afb1b3"/><rect x="5.500" y="5.500" width="4" height="4" fill="#afb1b3"/></svg>
<svg style="left:1234px;top:67.500px" width="11" height="13" viewBox="0 0 12 13"><ellipse cx="6" cy="2.500" rx="5.500" ry="2.200" fill="#afb1b3"/><path d="M0.500 4.300c0 3 11 3 11 0v2c0 3-11 3-11 0zM0.500 7.600c0 3 11 3 11 0v2c0 3-11 3-11 0z" fill="#afb1b3"/></svg>
<div class="vt" style="left:1245px;top:86.1px;transform:rotate(90deg);letter-spacing:-0.567px;">Database</div>
<svg style="left:1232px;top:155px" width="14" height="14" viewBox="0 0 14 14"><path d="M2 10c1.200-1 1-5 2.500-6.500C5.500 2.300 8 2.300 9 3.500C10.500 5 10.300 9 11.500 10z" fill="#afb1b3"/><rect x="5.300" y="11" width="3" height="1.600" fill="#afb1b3"/><circle cx="11" cy="2.500" r="2.300" fill="#db5860"/></svg>
<div class="vt" style="left:1245px;top:172.2px;transform:rotate(90deg);letter-spacing:-0.022px;">Notifications</div>
<svg style="left:1232px;top:259px" width="14" height="11" viewBox="0 0 14 11"><path d="M0.500 10V6C0.500 3 3 2 5.500 2C6.500 0.300 10.500 -0.300 12.500 1.200C14 2.300 13.600 4 12.300 4.300C11.200 4.600 10.700 3.600 11.300 3C10 2.600 9 3.300 9 4.600V10H7V7.500H4.500V10H2.500z" fill="#afb1b3"/></svg>
<div class="vt" style="left:1245px;top:276px;transform:rotate(90deg);letter-spacing:-0.564px;">Gradle</div>
<div class="t" style="left:48px;top:1039px;letter-spacing:-0.267px;">Git</div>
<div class="t" style="left:98.3px;top:1039px;letter-spacing:-1.200px;">Run</div>
<div class="t" style="left:153.4px;top:1039px;letter-spacing:-0.982px;">TODO</div>
<div class="t" style="left:222.1px;top:1039px;letter-spacing:-0.469px;">Problems</div>
<div class="t" style="left:308px;top:1039px;letter-spacing:-0.278px;">Terminal</div>
<div class="t" style="left:390.4px;top:1039px;letter-spacing:-0.359px;">Endpoints</div>
<div class="t" style="left:479.3px;top:1039px;letter-spacing:-0.931px;">Services</div>
<div class="t" style="left:556.3px;top:1039px;letter-spacing:-0.373px;">Profiler</div>
<div class="t" style="left:628.2px;top:1039px;letter-spacing:-0.671px;">Build</div>
<div class="t" style="left:691.2px;top:1039px;letter-spacing:-0.575px;">Dependencies</div>
<svg style="left:32px;top:1042px" width="10" height="13" viewBox="0 0 10 13"><path d="M2.300 1.500v10M2.300 8.300C7.800 8.300 7.800 6.500 7.800 3.500" fill="none" stroke="#afb1b3" stroke-width="1.800"/><circle cx="2.300" cy="2" r="1.900" fill="#afb1b3"/><circle cx="7.800" cy="2.800" r="1.900" fill="#afb1b3"/><circle cx="2.300" cy="11" r="1.700" fill="#afb1b3"/></svg>
<svg style="left:83px;top:1042px" width="12" height="13" viewBox="0 0 12 13"><path d="M0 0l8 5.5L0 11z" fill="#afb1b3"/><circle cx="9" cy="10.5" r="2" fill="#3fc22f"/></svg>
<svg style="left:137px;top:1044px" width="11" height="9" viewBox="0 0 11 9"><path d="M0 1h2M3.5 1H11M0 4.5h2M3.5 4.5H11M0 8h2M3.5 8H11" stroke="#afb1b3" stroke-width="1.6"/></svg>
<svg style="left:206px;top:1043px" width="10" height="10" viewBox="0 0 10 10"><circle cx="5" cy="5" r="5" fill="#afb1b3"/><path d="M5 2v3.500M5 6.700v1.500" stroke="#3c3f41" stroke-width="1.500"/></svg>
<svg style="left:292px;top:1043px" width="12" height="11" viewBox="0 0 12 11"><rect width="12" height="11" fill="#afb1b3"/><path d="M2 3l2.5 2.3L2 7.6M5.5 8h4" fill="none" stroke="#3c3f41" stroke-width="1.3"/></svg>
<svg style="left:373px;top:1042px" width="13" height="13" viewBox="0 0 13 13"><path d="M6.500 2.500L2.500 10.200M6.500 2.500l4 7.700" stroke="#afb1b3" stroke-width="1.600"/><circle cx="6.500" cy="2.600" r="2.600" fill="#afb1b3"/><circle cx="2.600" cy="10.300" r="2.600" fill="#afb1b3"/><circle cx="10.400" cy="10.300" r="2.600" fill="#afb1b3"/></svg>
<svg style="left:462px;top:1042.500px" width="13" height="12" viewBox="0 0 13 12"><path d="M0 6L3.300 0.300h6.400L13 6L9.700 11.700H3.300z" fill="#afb1b3"/><path d="M5 3.300v5.400l4.300-2.700z" fill="#3c3f41"/></svg>
<svg style="left:538px;top:1042px" width="14" height="14" viewBox="0 0 14 14"><path d="M6.3 10.6A4.8 4.8 0 1 1 10.8 5" fill="none" stroke="#afb1b3" stroke-width="1.4"/><path d="M6 2.5V6H3.5" fill="none" stroke="#afb1b3" stroke-width="1.2"/><path d="M8 6.5l5.5 3.5L8 13.5z" fill="#afb1b3"/></svg>
<svg style="left:611px;top:1042px" width="13" height="13" viewBox="0 0 13 13"><path d="M1 4.5L5 0.8L8.3 2.6L5.6 5.4L12.4 12L11 13L4.3 6.5L3 7.5z" fill="#afb1b3"/></svg>
<svg style="left:674px;top:1042px" width="13" height="13" viewBox="0 0 13 13"><path d="M6.5 0.5L12.5 3.5L6.5 6.5L0.5 3.5z" fill="#afb1b3"/><path d="M0.8 6.3L6.5 9.2L12.2 6.3M0.8 9.3L6.5 12.2L12.2 9.3" fill="none" stroke="#afb1b3" stroke-width="1.3"/></svg>
<svg style="left:8px;top:1063px" width="12" height="12" viewBox="0 0 12 12"><rect x="2.5" y="0.5" width="9" height="9" fill="none" stroke="#afb1b3"/><path d="M0.5 2.5v9h9" fill="none" stroke="#afb1b3"/></svg>
<div class="t" style="left:27.9px;top:1060px;letter-spacing:0.140px;">Build completed successfully in 779 ms (today</div>
<div class="t" style="left:284.6px;top:1060px;letter-spacing:1.500px;">오전</div>
<div class="t" style="left:312px;top:1060px;letter-spacing:-0.013px;">1:52)</div>
<div class="t" style="left:978.5px;top:1060px;letter-spacing:0.067px;">15:22</div>
<div class="t" style="left:1021.3px;top:1060px;letter-spacing:-1.200px;">CRLF</div>
<div class="t" style="left:1060.3px;top:1060px;letter-spacing:-0.674px;">UTF-8</div>
<div class="t" style="left:1104.1px;top:1060px;letter-spacing:-0.319px;">4 spaces</div>
<div class="t" style="left:1179.2px;top:1060px;letter-spacing:-0.095px;">master</div>
<svg style="left:1164px;top:1062px" width="10" height="14" viewBox="0 0 10 14"><path d="M2.300 1.500v11M2.300 9C7.800 9 7.800 7 7.800 3.500" fill="none" stroke="#afb1b3" stroke-width="1.800"/><circle cx="2.300" cy="2" r="1.900" fill="#afb1b3"/><circle cx="7.800" cy="2.800" r="1.900" fill="#afb1b3"/><circle cx="2.300" cy="12" r="1.700" fill="#afb1b3"/></svg>
<svg style="left:1225px;top:1063px" width="12" height="12" viewBox="0 0 12 12"><rect x="3" y="5" width="9" height="6.5" fill="#afb1b3"/><path d="M1 5V3.2a2.2 2.2 0 0 1 4.4 0V5" fill="none" stroke="#afb1b3" stroke-width="1.4"/></svg>
<svg style="left:604px;top:37px" width="16" height="12" viewBox="0 0 16 12"><circle cx="10.5" cy="3" r="2.6" fill="#8b8e90"/><path d="M6 11c0-4 2-5 4.5-5S15.5 7 15.5 11z" fill="#8b8e90"/><circle cx="5.5" cy="3.2" r="3" fill="#afb1b3"/><path d="M0 12c0-4.5 2.2-6 5.5-6S11 7.500 11 12z" fill="#afb1b3"/></svg>
<svg style="left:623px;top:42px" width="8" height="4" viewBox="0 0 8 4"><path d="M0 0h8L4 4z" fill="#afb1b3"/></svg>
<svg style="left:647px;top:36px" width="16" height="14" viewBox="0 0 16 14"><path d="M0.500 6.200L6.300 0.300L10.200 2.200L7.300 5.200L15.300 12.300L13.600 14L6 6.700L3.500 9z" fill="#4f9a4a"/></svg>
<svg style="left:684px;top:36px" width="16" height="16" viewBox="0 0 16 16"><path d="M1 9.500C1 4.500 5.500 2.800 13.500 1.500C13.500 7.500 10.500 10.500 4 10.500z" fill="#4a6a44"/><circle cx="9.500" cy="10" r="3.500" fill="#3c3f41" stroke="#6f7274" stroke-width="1.300"/><circle cx="9.500" cy="10" r="1" fill="#6f7274"/><circle cx="13" cy="13" r="1.900" fill="#1fd62a"/></svg>
<svg style="left:858px;top:35.500px" width="15" height="16" viewBox="0 0 15 16"><path d="M8 14.300A4.700 4.700 0 1 1 8 4.900" fill="none" stroke="#4f9a4a" stroke-width="2.100"/><path d="M8 0.800l6 4.100L8 9z" fill="#4f9a4a"/><rect x="8" y="9.800" width="5" height="5" fill="#afb1b3"/></svg>
<svg style="left:885px;top:36px" width="13" height="14" viewBox="0 0 13 14"><path d="M2.500 5h8v5c0 2.300-1.800 3.800-4 3.800s-4-1.500-4-3.800z" fill="#4f9a4a"/><path d="M3.300 4.200a3.200 3.200 0 0 1 6.400 0z" fill="#4f9a4a"/><path d="M0 6h2.500M10.500 6H13M0 9h2.500M10.500 9H13M0.500 12.300l2.300-1M12.500 12.300l-2.300-1M3 0.300l1.700 1.900M10 0.300L8.300 2.200" stroke="#4f9a4a" stroke-width="1.400"/><path d="M4 6.300h5M4 9.300h5" stroke="#3c3f41" stroke-width="1"/></svg>
<svg style="left:909px;top:36px" width="17" height="16" viewBox="0 0 17 16"><path d="M1 1.500h10.300v6.500c0 2.800-2.300 4.500-5.100 5.500c-2.800-1-5.200-2.700-5.200-5.500z" fill="#6e7173"/><path d="M1 1.500h5.200v12c-2.800-1-5.200-2.700-5.200-5.500z" fill="#afb1b3"/><path d="M6.200 3.200h3.400v3.300h-3.400z" fill="#3c3f41"/><path d="M8.200 6l8.300 4.600l-8.300 4.600z" fill="#4f9a4a" stroke="#3c3f41" stroke-width="0.800"/></svg>
<svg style="left:936px;top:35px" width="17" height="16" viewBox="0 0 17 16"><path d="M7.500 12.600A5.600 5.600 0 1 1 12.700 6" fill="none" stroke="#afb1b3" stroke-width="1.600"/><path d="M7 3.500V7.500H4.500" fill="none" stroke="#afb1b3" stroke-width="1.400"/><path d="M8.500 7l8 4.500l-8 4.500z" fill="#4f9a4a"/></svg>
<svg style="left:958px;top:42px" width="8" height="4" viewBox="0 0 8 4"><path d="M0 0h8L4 4z" fill="#afb1b3"/></svg>
<div class="a" style="left:979px;top:38px;width:10px;height:10px;background:#c75450"></div>
<svg style="left:1040px;top:37px" width="13" height="13" viewBox="0 0 13 13"><path d="M12 1L2.500 10.500M1.800 4.500v6.700H8.500" fill="none" stroke="#3592c4" stroke-width="2.500"/></svg>
<svg style="left:1065px;top:37px" width="16" height="13" viewBox="0 0 16 13"><path d="M1 7l4.500 4.500L15 1.500" fill="none" stroke="#4f9a4a" stroke-width="2.700"/></svg>
<svg style="left:1091px;top:37px" width="13" height="13" viewBox="0 0 13 13"><path d="M1 12L10.500 2.500M4.500 1.800h6.700V8.500" fill="none" stroke="#4f9a4a" stroke-width="2.500"/></svg>
<svg style="left:1117px;top:36px" width="15" height="15" viewBox="0 0 15 15"><circle cx="7.500" cy="7.500" r="6.300" fill="none" stroke="#5e6163" stroke-width="1.700"/><path d="M7.500 3.500v4.300l2.800 1.800" fill="none" stroke="#5e6163" stroke-width="1.500"/></svg>
<svg style="left:1144px;top:36px" width="14" height="15" viewBox="0 0 14 15"><path d="M2 5h6.500a4.300 4.300 0 0 1 0 8.600H5" fill="none" stroke="#afb1b3" stroke-width="1.800"/><path d="M5.500 0.800L1.300 5l4.200 4.200" fill="none" stroke="#afb1b3" stroke-width="1.800"/></svg>
<svg style="left:1176px;top:36px" width="15" height="15" viewBox="0 0 15 15"><circle cx="6" cy="6" r="4.800" fill="none" stroke="#afb1b3" stroke-width="1.900"/><path d="M9.500 9.500L14 14" stroke="#afb1b3" stroke-width="2.300"/></svg>
<svg style="left:1201px;top:35px" width="17" height="17" viewBox="0 0 17 17"><circle cx="8.500" cy="8.500" r="8.100" fill="#f0a732"/><path d="M8.500 4L12.300 8.200H9.600V12.500H7.400V8.200H4.700z" fill="#fff"/></svg>
<svg style="left:1227.500px;top:35.500px" width="15" height="15" viewBox="0 0 15 15"><defs><linearGradient id="jg1" x1="0" y1="0" x2="0.600" y2="1"><stop offset="0" stop-color="#f5f23a"/><stop offset="0.500" stop-color="#8fdc7a"/><stop offset="1" stop-color="#15b8e8"/></linearGradient><linearGradient id="jg2" x1="0" y1="0" x2="1" y2="1"><stop offset="0" stop-color="#2bc9a0"/><stop offset="0.500" stop-color="#1a8fe0"/><stop offset="1" stop-color="#1565d8"/></linearGradient></defs><path d="M1.500 0.300C7 0.300 12 3 14.600 6.500C12.500 10.500 8 14 3 14.700C1.500 14.700 0.800 12 0.500 8C0.300 4 0.800 0.300 1.500 0.300z" fill="url(#jg2)"/><path d="M1.500 0.300C4 1.500 7.300 4 8.300 6.800C7.500 10 5 13 3 14.700C1.500 14.700 0.800 12 0.500 8C0.300 4 0.800 0.300 1.500 0.300z" fill="url(#jg1)"/></svg></body></html>
